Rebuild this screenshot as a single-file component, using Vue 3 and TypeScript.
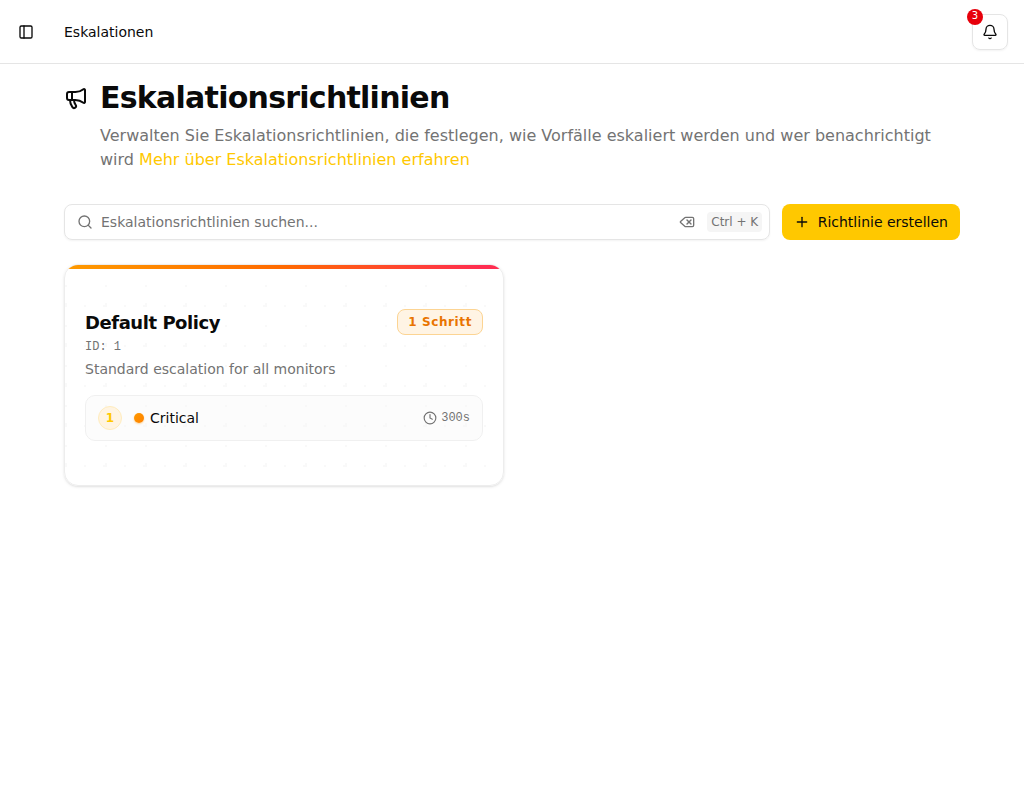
<script setup lang="ts">
import { ref } from "vue";

interface Step {
  id: number;
  name: string;
  delay: string;
}

interface Policy {
  id: number;
  name: string;
  description: string;
  steps: Step[];
}

const search = ref<string>("");
const alertCount = ref<number>(3);

const policies = ref<Policy[]>([
  {
    id: 1,
    name: "Default Policy",
    description: "Standard escalation for all monitors",
    steps: [{ id: 1, name: "Critical", delay: "300s" }],
  },
]);

const stepLabel = (count: number): string => `${count} ${count === 1 ? "Schritt" : "Schritte"}`;

const clearSearch = () => {
  search.value = "";
};
</script>

<template>
  <div class="page">
    <header class="topbar">
      <button class="sidebar-toggle" aria-label="Seitenleiste">
        <svg class="icon" width="16" height="16" viewBox="0 0 24 24">
          <rect width="18" height="18" x="3" y="3" rx="2" />
          <path d="M9 3v18" />
        </svg>
      </button>
      <span class="crumb">Eskalationen</span>
      <button class="bell-button" aria-label="Benachrichtigungen">
        <svg class="icon" width="16" height="16" viewBox="0 0 24 24">
          <path d="M10.268 21a2 2 0 0 0 3.464 0" />
          <path d="M3.262 15.326A1 1 0 0 0 4 17h16a1 1 0 0 0 .74-1.673C19.41 13.956 18 12.499 18 8A6 6 0 0 0 6 8c0 4.499-1.411 5.956-2.738 7.326" />
        </svg>
        <span class="bell-count">{{ alertCount }}</span>
      </button>
    </header>

    <main class="content">
      <div class="heading">
        <svg class="icon heading-icon" width="24" height="24" viewBox="0 0 24 24">
          <path d="M11 6a13 13 0 0 0 8.4-2.8A1 1 0 0 1 21 4v12a1 1 0 0 1-1.6.8A13 13 0 0 0 11 14H5a2 2 0 0 1-2-2V8a2 2 0 0 1 2-2z" />
          <path d="M6 14a12 12 0 0 0 2.4 7.2 2 2 0 0 0 3.2-2.4A8 8 0 0 1 10 14" />
          <path d="M8 6v8" />
        </svg>
        <div>
          <h1>Eskalationsrichtlinien</h1>
          <p>
            Verwalten Sie Eskalationsrichtlinien, die festlegen, wie Vorfälle eskaliert werden und wer benachrichtigt wird
            <a href="#">Mehr über Eskalationsrichtlinien erfahren</a>
          </p>
        </div>
      </div>

      <div class="toolbar">
        <div class="search">
          <svg class="icon" width="16" height="16" viewBox="0 0 24 24">
            <path d="m21 21-4.34-4.34" />
            <circle cx="11" cy="11" r="8" />
          </svg>
          <input v-model="search" type="text" placeholder="Eskalationsrichtlinien suchen..." />
          <button class="clear-button" aria-label="Leeren" @click="clearSearch">
            <svg class="icon" width="16" height="16" viewBox="0 0 24 24">
              <path d="M10 5a2 2 0 0 0-1.344.519l-6.328 5.74a1 1 0 0 0 0 1.481l6.328 5.741A2 2 0 0 0 10 19h10a2 2 0 0 0 2-2V7a2 2 0 0 0-2-2z" />
              <path d="m12 9 6 6" />
              <path d="m18 9-6 6" />
            </svg>
          </button>
          <kbd>Ctrl + K</kbd>
        </div>
        <button class="create-button">
          <svg class="icon" width="16" height="16" viewBox="0 0 24 24">
            <path d="M5 12h14" />
            <path d="M12 5v14" />
          </svg>
          Richtlinie erstellen
        </button>
      </div>

      <div class="grid">
        <article v-for="policy in policies" :key="policy.id" class="card">
          <div class="stripe"></div>
          <svg class="pattern" width="100%" height="100%">
            <defs>
              <pattern id="dots" y="2" width="40" height="40" patternUnits="userSpaceOnUse">
                <path d="M0 18h2v2H0zM19 38h2v2h-2zM0 36h2v4H0zM38 38h2v2h-2z" />
              </pattern>
            </defs>
            <rect y="4" width="100%" height="100%" fill="url(#dots)" />
          </svg>
          <div class="card-body">
            <div class="card-head">
              <h2>{{ policy.name }}</h2>
              <span class="badge">{{ stepLabel(policy.steps.length) }}</span>
            </div>
            <div class="policy-id">ID: {{ policy.id }}</div>
            <p class="description">{{ policy.description }}</p>
            <div v-for="(step, index) in policy.steps" :key="step.id" class="step">
              <span class="step-number">{{ index + 1 }}</span>
              <span class="dot"></span>
              <span class="step-name">{{ step.name }}</span>
              <svg class="icon" width="14" height="14" viewBox="0 0 24 24">
                <path d="M12 6v6l4 2" />
                <circle cx="12" cy="12" r="10" />
              </svg>
              <span class="delay">{{ step.delay }}</span>
            </div>
          </div>
        </article>
      </div>
    </main>
  </div>
</template>

<style>
body {
  background: #fff;
}
</style>

<style scoped>
.page {
  min-height: 800px;
  color: #0a0a0a;
  font-family: "DejaVu Sans", sans-serif;
  font-size: 14px;
  line-height: 20px;
}

button {
  display: flex;
  align-items: center;
  justify-content: center;
  box-sizing: border-box;
  padding: 0;
  border: none;
  background: none;
  color: inherit;
  font: inherit;
  cursor: pointer;
}

.icon {
  flex-shrink: 0;
  fill: none;
  stroke: currentColor;
  stroke-width: 2;
  stroke-linecap: round;
  stroke-linejoin: round;
}

.topbar {
  display: flex;
  align-items: center;
  box-sizing: border-box;
  height: 64px;
  padding: 0 16px 0 12px;
  border-bottom: 1px solid #e5e5e5;
}

.sidebar-toggle {
  width: 28px;
  height: 28px;
  margin-right: 24px;
}

.crumb {
  flex: 1;
}

.bell-button {
  position: relative;
  width: 36px;
  height: 36px;
  border: 1px solid #e5e5e5;
  border-radius: 8px;
  box-shadow: 0 1px 2px rgba(0, 0, 0, 0.05);
}

.bell-count {
  position: absolute;
  top: -6px;
  left: -6px;
  width: 16px;
  height: 16px;
  border-radius: 50%;
  background: #e7000b;
  color: #fff;
  font-size: 10px;
  line-height: 14px;
  text-align: center;
}

.content {
  padding: 16px 64px;
}

.heading {
  display: flex;
  gap: 12px;
}

.heading-icon {
  margin-top: 6px;
}

h1 {
  margin: 0;
  font-size: 30px;
  line-height: 36px;
  letter-spacing: -0.75px;
}

.heading p {
  margin: 8px 0 0;
  color: #737373;
  font-size: 16px;
  line-height: 24px;
}

.heading a {
  color: #ffc800;
  text-decoration: none;
}

.toolbar {
  display: flex;
  gap: 12px;
  margin-top: 32px;
}

.search {
  display: flex;
  flex: 1;
  align-items: center;
  box-sizing: border-box;
  height: 36px;
  padding: 0 7px 0 12px;
  border: 1px solid #e5e5e5;
  border-radius: 8px;
  color: #737373;
  box-shadow: 0 1px 2px rgba(0, 0, 0, 0.05);
}

.search input {
  flex: 1;
  min-width: 0;
  padding: 0 8px;
  border: none;
  outline: none;
  background: none;
  color: #0a0a0a;
  font: inherit;
}

.search input::placeholder {
  color: #737373;
  opacity: 1;
}

.clear-button {
  margin-right: 12px;
}

kbd {
  height: 20px;
  padding: 0 3.5px 0 4.5px;
  border-radius: 4px;
  background: #f5f5f5;
  font-family: inherit;
  font-size: 12px;
}

.create-button {
  gap: 8px;
  height: 36px;
  padding: 0 12px;
  border-radius: 8px;
  background: #ffc800;
}

.grid {
  display: grid;
  grid-template-columns: repeat(2, 1fr);
  gap: 16px;
  margin-top: 24px;
}

.card {
  position: relative;
  box-sizing: border-box;
  height: 222px;
  overflow: hidden;
  border: 1px solid #ededed;
  border-radius: 14px;
  box-shadow: 0 1px 3px rgba(0, 0, 0, 0.1), 0 1px 2px -1px rgba(0, 0, 0, 0.1);
}

.stripe {
  height: 4px;
  background: linear-gradient(to right, #fe9a00, #ff6900 50%, #ff2d50 95%);
}

.pattern {
  position: absolute;
  inset: 0;
  fill: #f9f9f9;
}

.card-body {
  position: relative;
  padding: 40px 20px;
}

.card-head {
  display: flex;
  justify-content: space-between;
}

h2 {
  margin: 0;
  font-size: 18px;
  line-height: 28px;
  letter-spacing: -0.45px;
}

.badge {
  box-sizing: border-box;
  height: 26px;
  padding: 4px 10px;
  border: 1px solid #fcd493;
  border-radius: 8px;
  background: #fff4e4;
  color: #e97400;
  font-size: 12px;
  font-weight: 700;
  line-height: 16px;
  letter-spacing: 0.6px;
}

.policy-id {
  margin-top: 2px;
  color: #737373;
  font-family: "Liberation Mono", monospace;
  font-size: 12px;
  line-height: 16px;
}

.description {
  margin: 4px 0 16px;
  color: #737373;
}

.step {
  display: flex;
  align-items: center;
  box-sizing: border-box;
  height: 46px;
  padding: 0 12px;
  border: 1px solid #f0f0f0;
  border-radius: 10px;
  background: rgba(245, 245, 245, 0.3);
  color: #737373;
}

.step-number {
  box-sizing: border-box;
  width: 24px;
  height: 24px;
  border: 1px solid #ffecbd;
  border-radius: 50%;
  background: #fff4e2;
  color: #ffc800;
  font-size: 12px;
  font-weight: 700;
  line-height: 22px;
  text-align: center;
}

.dot {
  width: 10px;
  height: 10px;
  margin: 0 6px 0 12px;
  border-radius: 50%;
  background: linear-gradient(135deg, #fe9a00, #ff8000);
  box-shadow: 0 1px 2px rgba(254, 154, 0, 0.4);
}

.step-name {
  flex: 1;
  color: #0a0a0a;
}

.delay {
  margin-left: 4px;
  font-family: "Liberation Mono", monospace;
  font-size: 12px;
}
</style>
